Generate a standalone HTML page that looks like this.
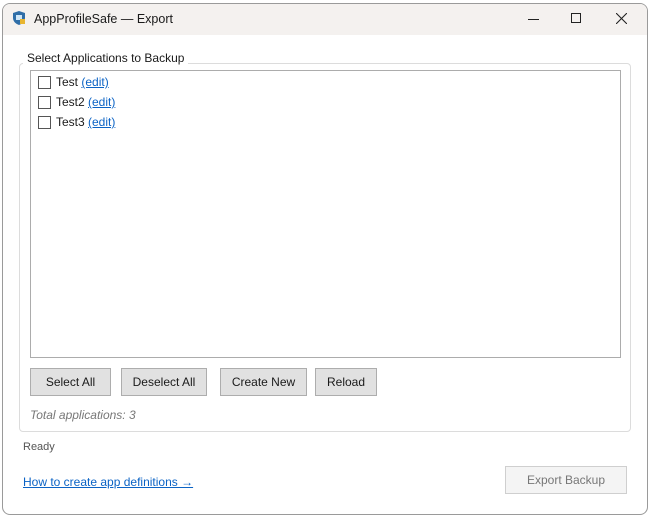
<!DOCTYPE html>
<html><head><style>
*{box-sizing:border-box;margin:0;padding:0}
body{width:650px;height:520px;background:#fff;font-family:"Liberation Sans",sans-serif;font-size:12px;color:#1a1a1a;position:relative;overflow:hidden}
.win{position:absolute;left:2px;top:3px;width:646px;height:512px;border:1px solid #9a9a9a;border-radius:8px;overflow:hidden;background:#fff}
.title{position:absolute;left:0;top:0;width:100%;height:31px;background:#f4f1ef}
.abs{position:absolute}
.btn{position:absolute;height:28px;background:#e1e1e1;border:1px solid #adadad;text-align:center;line-height:26px;font-size:12px;color:#1a1a1a}
a{color:#0b63c5;text-decoration:underline}
.cb{position:absolute;width:13px;height:13px;border:1px solid #555;background:#fff}
</style></head><body>
<div class="win">
<div class="title">
<svg class="abs" style="left:8px;top:6px" width="16" height="16" viewBox="0 0 16 16"><path d="M8 1L14 3V8C14 11.5 11 14 8 15C5 14 2 11.5 2 8V3Z" fill="#2f6ea8"/><rect x="5" y="5" width="6" height="5" fill="#cfe6f7"/><rect x="9" y="9" width="5" height="5" fill="#e8b530"/></svg>
<div class="abs" style="left:31px;top:8px;font-size:12.5px">AppProfileSafe — Export</div>
<div class="abs" style="left:525px;top:15px;width:11px;height:1px;background:#222"></div>
<div class="abs" style="left:568px;top:9px;width:10px;height:10px;border:1px solid #222"></div>
<svg class="abs" style="left:613px;top:9px" width="11" height="11"><path d="M0 0L11 11M11 0L0 11" stroke="#222" stroke-width="1.1"/></svg>
</div>
<div class="abs" style="left:16px;top:59px;width:612px;height:369px;border:1px solid #dcdcdc;border-radius:4px"></div>
<div class="abs" style="left:20px;top:47px;background:#fff;padding:0 4px">Select Applications to Backup</div>
<div class="abs" style="left:27px;top:66px;width:591px;height:288px;border:1px solid #acacac"></div>
<div class="cb" style="left:35px;top:72px"></div><div class="abs" style="left:53px;top:71px">Test <a>(edit)</a></div>
<div class="cb" style="left:35px;top:92px"></div><div class="abs" style="left:53px;top:91px">Test2 <a>(edit)</a></div>
<div class="cb" style="left:35px;top:112px"></div><div class="abs" style="left:53px;top:111px">Test3 <a>(edit)</a></div>
<div class="btn" style="left:27px;top:364px;width:81px">Select All</div>
<div class="btn" style="left:118px;top:364px;width:86px">Deselect All</div>
<div class="btn" style="left:217px;top:364px;width:87px">Create New</div>
<div class="btn" style="left:312px;top:364px;width:62px">Reload</div>
<div class="abs" style="left:27px;top:404px;color:#777;font-style:italic">Total applications: 3</div>
<div class="abs" style="left:20px;top:437px;color:#555;font-size:11px">Ready</div>
<div class="abs" style="left:20px;top:471px"><a>How to create app definitions →</a></div>
<div class="btn" style="left:502px;top:462px;width:122px;background:#f4f4f4;border-color:#cfcfcf;color:#777">Export Backup</div>
</div>
</body></html>
